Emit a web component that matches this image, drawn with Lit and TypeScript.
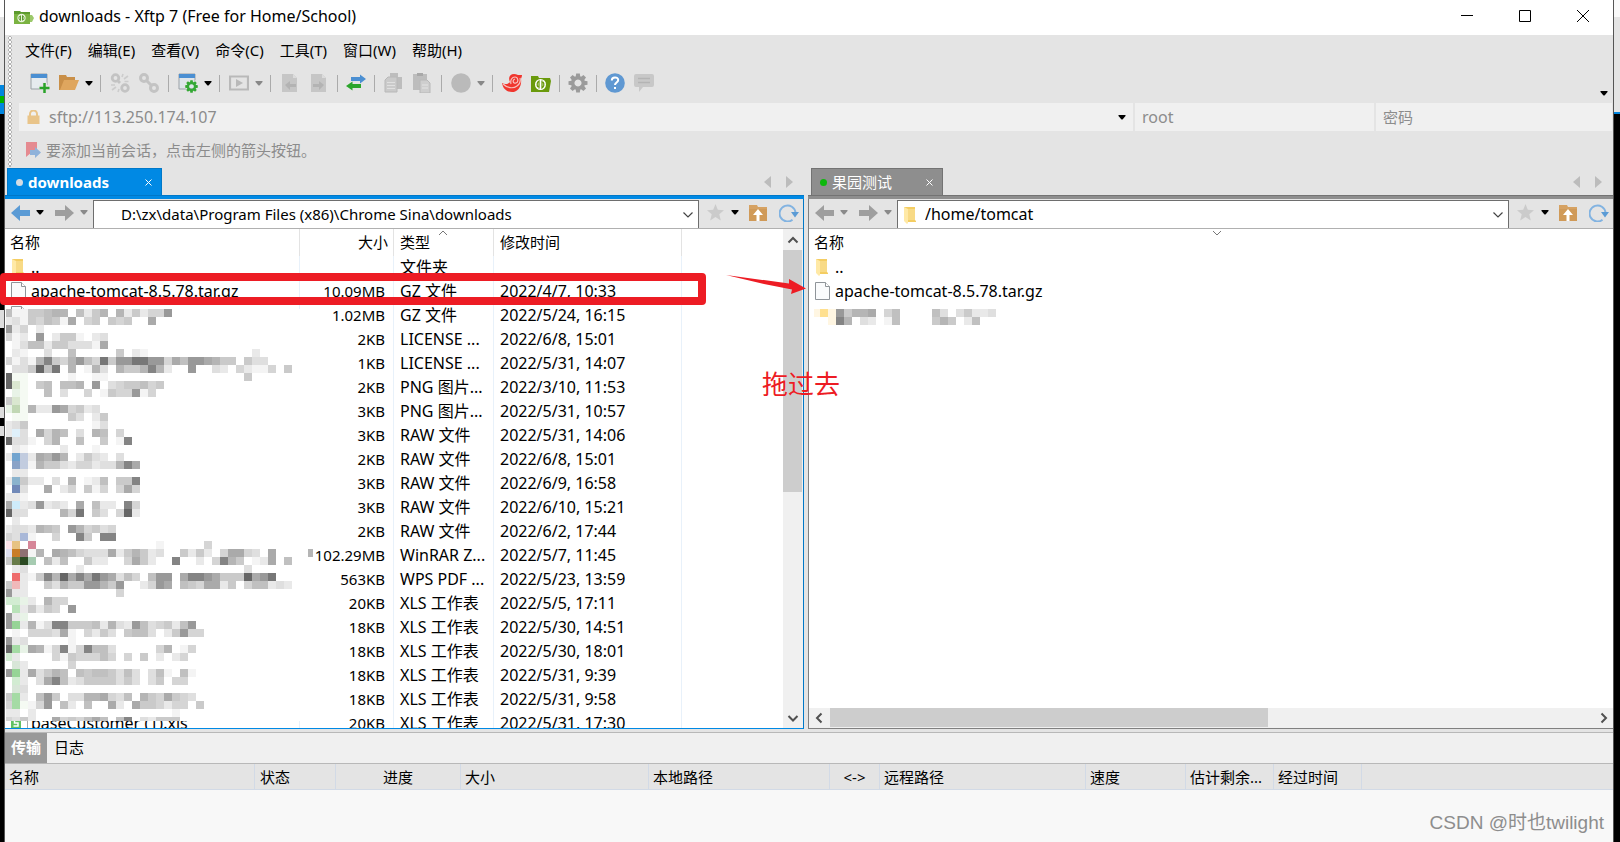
import { LitElement, html, svg, css, nothing, TemplateResult } from "lit";
import { customElement, property } from "lit/decorators.js";

const base = css`
  :host { box-sizing: border-box; font: 15px/20px "Noto Sans", "Noto Sans CJK SC", sans-serif; color: #000; }
  *, *::before, *::after { box-sizing: border-box; }
  button { display: inline-flex; align-items: center; justify-content: center; padding: 0; margin: 0; border: 0; background: none; font: inherit; color: inherit; flex: none; }
  input { font: inherit; border: 0; padding: 0; margin: 0; background: none; outline: none; min-width: 0; color: inherit; }
  svg { display: block; flex: none; }
`;

const caret = (color = "#000") => html`<svg width="8" height="5" viewBox="0 0 8 5"><path d="M.5 0h7v1L4.500 4.500h-1L.5 1z" fill=${color} /></svg>`;
const chevron = (d: string, color = "#444", w = 1.2) => html`<svg width="12" height="12" viewBox="0 0 12 12"><path d=${d} fill="none" stroke=${color} stroke-width=${w} /></svg>`;
const folder = html`<svg width="14" height="18" viewBox="0 0 14 18"><path d="M1 1h11v13l1 1v1H4L1 14z" fill="#f4cd62" /><path d="M4 3h8v11H4z" fill="#f8da86" /><path d="M1 1l4 2v14l-1 1-3-3z" fill="#ffe9a6" /></svg>`;
const page = html`<svg width="15" height="18" viewBox="0 0 15 18"><path d="M.5.5h10l4 4v13H.5z" fill="#fafbfc" stroke="#8f9499" /><path d="M10.500.5v4h4" fill="#fff" stroke="#8f9499" /></svg>`;
const sheet = html`<svg width="17" height="18" viewBox="0 0 17 18"><path d="M4 .5h12.500v17H4z" fill="#fff" stroke="#a9a9a9" /><path d="M0 3h10v12H0z" fill="#62c162" /><path d="M7.500 6H3.500v3h3.500v3H2.500" fill="none" stroke="#fff" stroke-width="1.500" /></svg>`;

const icon = (content: unknown) => html`<svg width="20" height="20" viewBox="0 0 20 20">${content}</svg>`;
const cog = (color: string, cx: number, cy: number, k: number) => svg`<g transform="translate(${cx} ${cy}) scale(${k})" fill=${color}>
  ${[0, 45, 90, 135, 180, 225, 270, 315].map((a) => svg`<path transform="rotate(${a})" d="M-1.800-9.500h3.600L2.500-5h-5z" />`)}
  <path fill-rule="evenodd" d="M0-7a7 7 0 1 0 .01 0zM0-3.500a3.500 3.500 0 1 1-.01 0z" /></g>`;

const icons: Record<string, TemplateResult> = {
  create: icon(svg`<path d="M1 1h16v15H1z" fill="#e6ebef" stroke="#9aa1a6" /><path d="M1 1h16v4H1z" fill="#4b8fd2" /><path d="M14.500 9.500v10M9.500 14.500h10" stroke="#e4e4e4" stroke-width="5" /><path d="M14.500 10v10M9.500 15h10" stroke="#29a329" stroke-width="2.500" />`),
  open: icon(svg`<path d="M0 2h7l1 2h8v4H6L2 17H0z" fill="#c98f48" /><path d="M5 7h15l-4 10H1z" fill="#dfa65e" />`),
  unlink: icon(svg`<g fill="none" stroke="#c3c3c3" stroke-width="2.800"><circle cx="5.500" cy="5" r="3.300" /><circle cx="15" cy="15" r="3.300" /><path d="M8 8l2 2" /></g><path d="M12 4l1-3M14 6l4-3M14.500 8.500h4M1 12h4M2 17l4-3M8 19l1-3" stroke="#cccccc" stroke-width="1.600" />`),
  link: icon(svg`<g fill="none" stroke="#c3c3c3" stroke-width="3"><circle cx="5" cy="5" r="3.500" /><circle cx="15" cy="15" r="3.500" /><path d="M7 7l6 6" /></g>`),
  props: icon(svg`<path d="M1 1h16v15H1z" fill="#dfe5ea" stroke="#9aa1a6" /><path d="M1 1h16v4H1z" fill="#4b8fd2" />${cog("#e4e4e4", 13.5, 13.5, 0.8)}${cog("#35a835", 13.5, 13.5, 0.66)}`),
  play: icon(svg`<path d="M1 3.500h18v13H1z" fill="none" stroke="#b9b9b9" stroke-width="2.200" /><path d="M7 6l7 4-7 4z" fill="#b9b9b9" />`),
  left: icon(svg`<path d="M2 1h11l4 4v14H2z" fill="#c6c6c6" /><path d="M13 1v4h4z" fill="#dcdcdc" /><path d="M5 12l5-4v3h6v3h-6v3z" fill="#b3b3b3" />`),
  right: icon(svg`<path d="M2 1h11l4 4v14H2z" fill="#c6c6c6" /><path d="M13 1v4h4z" fill="#dcdcdc" /><path d="M15 12l-5-4v3H4v3h6v3z" fill="#b3b3b3" />`),
  transfer: icon(svg`<path d="M5 4h9V1.500L20 6l-6 4.500V8H5z" fill="#4b8fd2" /><path d="M15 11H6.500V8.500L0 13l6.500 4.500V15H15z" fill="#2ba52b" />`),
  copy: icon(svg`<path d="M7 0h8v4h4v12H7z" fill="#bdbdbd" /><path d="M5 4L2 7v12h12V4z" fill="#cacaca" stroke="#b8b8b8" /><path d="M4 9.500h8M4 12.500h8M4 15.500h8" stroke="#e0e0e0" />`),
  paste: icon(svg`<path d="M1 1h14v16H1z" fill="#bdbdbd" /><path d="M5 0h6v3H5z" fill="#a8a8a8" /><path d="M8 7h7l3 3v10H8z" fill="#cecece" stroke="#b8b8b8" /><path d="M10 12h6M10 15h6" stroke="#e4e4e4" />`),
  disc: icon(svg`<circle cx="10" cy="10" r="9.800" fill="#bababa" />`),
  shell: icon(svg`<path d="M20 2c0 2-1 3-1 4 1 7-3 13-9 13-5 0-9-3-10-9 4 2 6 1 8-1C5 3 10-1 16 2z" fill="#f0362e" /><path d="M9 11c-1-4 1-7 4-7s4 5 1 6-4-3-1-4M1 11c4 4 10 5 14 2 3-2 4-4 3-8" fill="none" stroke="#f7c1bd" stroke-width="1.200" />`),
  ftp: icon(svg`<path d="M0 3h7l1 2h11l1 3-2 11H0z" fill="#6a9a0c" /><circle cx="9.500" cy="11.500" r="5.500" fill="#fff" /><path d="M8 15.500V8c-2 1-2.500 4-1 6M11 7.500V15c2-1 2.500-4 1-6" fill="none" stroke="#6a9a0c" stroke-width="1.300" />`),
  gear: icon(cog("#9b9b9b", 10, 10, 1)),
  help: icon(svg`<circle cx="10" cy="10" r="9.800" fill="#5f98d2" /><path d="M6.800 7.500c0-4 6.400-4 6.400-.5 0 2.500-3.200 2.500-3.200 5M10 14v2" fill="none" stroke="#fff" stroke-width="2" />`),
  chat: icon(svg`<path d="M2 1h16a2 2 0 0 1 2 2v9a2 2 0 0 1-2 2H9l-4 5v-5H2a2 2 0 0 1-2-2V3a2 2 0 0 1 2-2z" fill="#c8c8c8" /><path d="M4 5.500h12M4 9.500h12" stroke="#b4b4b4" stroke-width="1.500" />`),
};

/* Shades of the censored blocks: lower case for greys, the rest for tints. */
const tones: Record<string, string> = {
  a: "#f4f4f4", b: "#e9e9e9", c: "#dfdfdf", d: "#d5d5d5", e: "#cacaca", f: "#c0c0c0", g: "#b5b5b5", h: "#aaaaaa", i: "#999999", j: "#848484", k: "#777777", l: "#666666",
  P: "#f5faf3", G: "#dae7d0", H: "#e8f3e7", I: "#c1d7b4", S: "#dff0fa", T: "#72a4cf", U: "#c2ccdf", V: "#8aa3c7", W: "#8bb3cd", X: "#7189b8", Y: "#ceebfa", Z: "#a9b8d8",
  Q: "#fce4ea", O: "#e7c283", R: "#d68698", M: "#dfe0f0", N: "#c97d27", B: "#8f7073", C: "#677b48", D: "#2b4a22", E: "#a6cbb1", F: "#ee6c6c", J: "#f0b9ba", K: "#d2ecd2", L: "#b9e2b9",
  "8": "#96d496", "7": "#a5dba5", "3": "#d8e6d8", "1": "#fff6e2", "2": "#ffe08f",
};
const leftBlocks = [
  "faaeefgg.fbeg.gbebddi", "bcaedfeah.de.ede..h", "ibd.b", "dab.i.beea.bc", ".acffbeecccah", ".ba..c..f.....e.ba.............b",
  "dacagjedgifdkeiikkiidhfiihgee.ecc", ".ccelfk.g.agc.geegjgb..i..cb.dbaad.e", "lPP.....a..aa.................e", "lGP.ef.ffg.i.cdeefde",
  ".HP..f.c..d.aeddiad", "eGP", "HIPgbbihdebc", ".PP.....ec.be", "bce........ac", "bSc.hdgf.c.gf.d", "lcca.dg..f..e.aj", ".ba....b...a",
  "bTUbhgig.becb.c", ".VUageecbddbccgjh", ".bb", "bWebb.c.g.abf.eej", ".Xc..h.bd.ead.dhd", "bba", "hYbcibcb.h.fbb.jd", "lcc....gdk.ec.dlb", ".b",
  "bccbgfe.igdecd", "dcZa..d..je.jj", "QO.R...............a.....d", "MNBag.hgfdccchbegebc..ebeb.dhhdc.h", "eCDE.fbf..ebb..dheb..j..b.djge.abh.f",
  ".bc......b....................c", ".Fbaejglhjhkihcfd.fii.hjjiheeelhik", "eJb..ecgeeiigei..bdih.fedhhbe.dffbcb", "ibb...........d",
  "KKHb.gdd", ".Lbebed.i", "ibH", "i8bgacjjeeefbgcbifcdebfi", ".a.dddcha.dbec.effc.beidd", "ibc.....a", "l7Hhgadjadjffc.....dg.ad",
  "Kb....daedddfd.d.e.b.bd", ".3b.....d", "i8bhcegf.feffecfc.cfa.fa", ".Kb.chjfbceeeecec.ce.dd", ".3c", "e7b.fie.ccgghdcf.gedhedc",
  "d7Padi.fb.f..hb.heedbdd.e", "bb.b.................a", "dceb..hdedfhf.fj.cbeee",
];
const rightBlocks = ["121ieggh.df....fc.cebbc", "..1jg.cb.af....ege.bf"];

@customElement("pixel-mask")
class PixelMask extends LitElement {
  @property({ attribute: false }) rows: string[] = [];
  @property({ type: Number }) cut = 0;
  static styles = css`:host { display: block; } svg { display: block; }`;
  render() {
    const h = this.rows.length * 8 - this.cut;
    return html`<svg width="302" height=${h} viewBox="0 0 302 ${h}" shape-rendering="crispEdges">
      <rect width="302" height=${h} fill="#fff" />
      ${this.rows.map((row, y) => [...row].map((c, x) => c in tones
        ? svg`<rect x=${x ? x * 8 - 2 : 0} y=${y * 8} width=${x ? 8 : 6} height="8" fill=${tones[c]} />` : nothing))}
    </svg>`;
  }
}

interface FileRow { name: string; icon?: TemplateResult; size?: string; type?: string; date?: string }
const localFiles: FileRow[] = [
  { name: "..", icon: folder, type: "文件夹" },
  { name: "apache-tomcat-8.5.78.tar.gz", icon: page, size: "10.09MB", type: "GZ 文件", date: "2022/4/7, 10:33" },
  { name: "", icon: page, size: "1.02MB", type: "GZ 文件", date: "2022/5/24, 16:15" },
  ...([
    ["2KB", "LICENSE ...", "2022/6/8, 15:01"], ["1KB", "LICENSE ...", "2022/5/31, 14:07"], ["2KB", "PNG 图片...", "2022/3/10, 11:53"],
    ["3KB", "PNG 图片...", "2022/5/31, 10:57"], ["3KB", "RAW 文件", "2022/5/31, 14:06"], ["2KB", "RAW 文件", "2022/6/8, 15:01"],
    ["3KB", "RAW 文件", "2022/6/9, 16:58"], ["3KB", "RAW 文件", "2022/6/10, 15:21"], ["2KB", "RAW 文件", "2022/6/2, 17:44"],
    ["102.29MB", "WinRAR Z...", "2022/5/7, 11:45"], ["563KB", "WPS PDF ...", "2022/5/23, 13:59"], ["20KB", "XLS 工作表", "2022/5/5, 17:11"],
    ["18KB", "XLS 工作表", "2022/5/30, 14:51"], ["18KB", "XLS 工作表", "2022/5/30, 18:01"], ["18KB", "XLS 工作表", "2022/5/31, 9:39"],
    ["18KB", "XLS 工作表", "2022/5/31, 9:58"],
  ].map(([size, type, date]) => ({ name: "", size, type, date }))),
  { name: "baseCustomer (1).xls", icon: sheet, size: "20KB", type: "XLS 工作表", date: "2022/5/31, 17:30" },
];
const remoteFiles: FileRow[] = [
  { name: "..", icon: folder },
  { name: "apache-tomcat-8.5.78.tar.gz", icon: page },
];

@customElement("file-pane")
class FilePane extends LitElement {
  @property({ type: Boolean, reflect: true }) remote = false;
  @property() label = "";
  @property() path = "";
  @property({ attribute: false }) files: FileRow[] = [];

  static styles = [base, css`
    :host { --accent: #0089e4; --edge: #0078c8; display: flex; flex-direction: column; min-width: 0; min-height: 0; }
    :host([remote]) { --accent: #8e8e8e; --edge: #737373; }
    .tabs { display: flex; align-items: flex-end; justify-content: space-between; height: 27px; padding: 0 11px 0 2px; flex: none; }
    .tab { display: flex; align-items: center; width: 155px; height: 27px; padding: 0 7px 0 8px; gap: 5px; background: var(--accent); border: 1px solid var(--edge); border-bottom: 0; color: #fff; font-weight: 700; }
    :host([remote]) .tab { width: 132px; font-weight: 400; }
    :host([remote]) .tabs { padding-left: 3px; }
    .dot { width: 7px; height: 7px; border-radius: 50%; background: #d4dde4; }
    :host([remote]) .dot { background: #0cb80c; }
    .tab button { width: 12px; margin-left: auto; }
    .turn { display: flex; gap: 15px; align-self: center; }
    .bar { height: 4px; flex: none; background: var(--accent); border-top: 1px solid var(--edge); }
    .frame { display: flex; flex-direction: column; flex: 1; min-height: 0; border-right: 1px solid var(--edge); border-bottom: 1px solid var(--accent); }
    :host([remote]) .frame { border-right: 0; border-left: 1px solid #808080; border-bottom-color: #808080; }
    .nav { display: flex; height: 30px; flex: none; background: #e4e4e4; border-bottom: 1px solid #b0b0b0; padding-top: 1px; }
    .history, .actions { display: flex; align-items: center; flex: none; padding-bottom: 3px; }
    .history { width: 88px; padding-left: 6px; gap: 6px; }
    .history .fwd { margin-left: 5px; }
    .actions { width: 104px; padding-left: 8px; gap: 7px; }
    .actions .refresh { margin-left: 5px; }
    .actions .up { margin-left: 3px; }
    .path { display: flex; align-items: center; flex: 1; min-width: 0; background: #fff; border: 1px solid #6e6e6e; border-bottom: 0; padding: 0 4px 0 5px; gap: 8px; }
    .path input { flex: 1; height: 26px; padding-bottom: 2px; }
    :host([remote]) .path input { font-size: 16px; }
    .slot { width: 14px; flex: none; }
    .list { display: flex; flex: 1; min-height: 0; background: #fff; }
    :host([remote]) .list { flex-direction: column; }
    .view { flex: 1; min-width: 0; min-height: 0; overflow: hidden; }
    table { width: 100%; border-collapse: separate; border-spacing: 0; table-layout: fixed; }
    th, td { padding: 0 0 2px 6px; height: 24px; text-align: left; font-weight: 400; white-space: nowrap; overflow: hidden; border-right: 1px solid #e8f1fa; }
    td { font-size: 16px; }
    th { height: 27px; position: relative; border-right-color: #e3e3e3; }
    th:first-child { padding-left: 5px; }
    th:last-child, td:last-child { border-right: 0; }
    .num { text-align: right; padding-right: 8px; font-size: 15px; }
    th.num { padding-right: 5px; }
    .c-name { width: 295px; } .c-size { width: 94px; } .c-type { width: 100px; } .c-date { width: 188px; }
    .file { display: flex; align-items: center; gap: 5px; height: 22px; }
    .pic { width: 15px; flex: none; }
    .sort { position: absolute; top: 0; left: 43%; }
    :host([remote]) .sort { left: 50%; }
    .vbar { display: flex; flex-direction: column; width: 20px; background: #f0f0f0; flex: none; }
    .vbar button { width: 20px; height: 21px; }
    .vtrack { flex: 1; } .vthumb { width: 19px; height: 53%; background: #cdcdcd; }
    .hbar { display: flex; height: 20px; background: #f0f0f0; flex: none; }
    .hbar button { width: 21px; height: 19px; }
    .htrack { flex: 1; } .hthumb { width: 57.5%; height: 19px; background: #cdcdcd; }
  `];

  private cell(f: FileRow) {
    return html`<td><div class="file"><span class="pic">${f.icon ?? nothing}</span>${f.name}</div></td>`;
  }

  render() {
    const back = this.remote ? "#9e9e9e" : "#5b9bd5";
    return html`
      <div class="tabs">
        <div class="tab"><span class="dot"></span>${this.label}
          <button aria-label="关闭">${chevron("M3.500 3.500l6 6M9.500 3.500l-6 6", "#fff", 1)}</button></div>
        <div class="turn">
          <button aria-label="上一个"><svg width="7" height="12" viewBox="0 0 7 12"><path d="M7 0v12L0 6z" fill="#bcbcbc" /></svg></button>
          <button aria-label="下一个"><svg width="7" height="12" viewBox="0 0 7 12"><path d="M0 0v12l7-6z" fill="#bcbcbc" /></svg></button>
        </div>
      </div>
      <div class="bar"></div>
      <div class="frame">
        <div class="nav">
          <div class="history">
            <button aria-label="后退"><svg width="19" height="16" viewBox="0 0 19 16"><path d="M0 8l9-8v5h10v6H9v5z" fill=${back} /></svg></button>
            <button aria-label="后退记录">${caret(this.remote ? "#8a8a8a" : "#000")}</button>
            <button class="fwd" aria-label="前进"><svg width="19" height="16" viewBox="0 0 19 16"><path d="M19 8l-9-8v5H0v6h10v5z" fill="#9e9e9e" /></svg></button>
            <button aria-label="前进记录">${caret("#8a8a8a")}</button>
          </div>
          <div class="path"><span class="slot">${this.remote ? folder : nothing}</span>
            <input aria-label="路径" .value=${this.path} />
            <button aria-label="展开">${chevron("M1.500 3.500l4.500 4.500 4.500-4.500")}</button></div>
          <div class="actions">
            <button aria-label="收藏"><svg width="17" height="17" viewBox="0 0 17 17"><path d="M8.500 0l2.300 5.800 6.200.5-4.700 4 1.500 6.200-5.300-3.400-5.300 3.400 1.500-6.200-4.700-4 6.200-.5z" fill="#cbcbcb" /></svg></button>
            <button aria-label="收藏夹">${caret()}</button>
            <button class="up" aria-label="上级目录"><svg width="18" height="16" viewBox="0 0 18 16"><path d="M0 0h8l1 2h9v14H0z" fill="#d6a263" /><path d="M0 4h18v12H0z" fill="#d09a58" /><path d="M9 4l5 6h-3.500v6h-3v-6H4z" fill="#fff" /></svg></button>
            <button class="refresh" aria-label="刷新"><svg width="20" height="18" viewBox="0 0 20 18"><path d="M13.500 15.800A8 8 0 1 1 16.500 8.500" fill="none" stroke="#82b3e1" stroke-width="2" /><path d="M12 8h8l-4 5.500z" fill="#5b9bd5" /></svg></button>
          </div>
        </div>
        <div class="list">
          <div class="view">${this.remote ? this.remoteTable() : this.localTable()}</div>
          ${this.remote
            ? html`<div class="hbar"><button aria-label="向左">${chevron("M7.500 1.500L3 6l4.500 4.500", "#505050", 2)}</button><div class="htrack"><div class="hthumb"></div></div><button aria-label="向右">${chevron("M4.500 1.500L9 6l-4.500 4.500", "#505050", 2)}</button></div>`
            : html`<div class="vbar"><button aria-label="向上">${chevron("M1.500 8.500L6 4l4.500 4.500", "#505050", 2)}</button><div class="vtrack"><div class="vthumb"></div></div><button aria-label="向下">${chevron("M1.500 4L6 8.500 10.500 4", "#505050", 2)}</button></div>`}
        </div>
      </div>`;
  }

  private localTable() {
    return html`<table>
      <thead><tr><th class="c-name">名称</th><th class="c-size num">大小</th>
        <th class="c-type">类型<span class="sort">${chevron("M2 6l4-4 4 4", "#777", 1)}</span></th><th class="c-date">修改时间</th><th></th></tr></thead>
      <tbody>${this.files.map((f) => html`<tr>${this.cell(f)}<td class="num">${f.size ?? ""}</td><td>${f.type}</td><td>${f.date ?? ""}</td><td></td></tr>`)}</tbody>
    </table>`;
  }

  private remoteTable() {
    return html`<table>
      <thead><tr><th>名称<span class="sort">${chevron("M2 2l4 4 4-4", "#777", 1)}</span></th></tr></thead>
      <tbody>${this.files.map((f) => html`<tr>${this.cell(f)}</tr>`)}</tbody>
    </table>`;
  }
}

type Tool = [name: keyof typeof icons, label: string, arrow?: "on" | "off"] | "sep" | "tight";
const tools: Tool[] = [
  ["create", "新建"], ["open", "打开", "on"], "sep", ["unlink", "断开"], ["link", "重新连接"], "sep", ["props", "属性", "on"], "sep",
  ["play", "同步", "off"], "sep", ["left", "向左传输"], ["right", "向右传输"], "tight", ["transfer", "传输"], "tight", ["copy", "复制"], ["paste", "粘贴"], "sep",
  ["disc", "编码", "off"], "sep", ["shell", "Xshell"], ["ftp", "Xftp"], "tight", ["gear", "选项"], "tight", ["help", "帮助"], ["chat", "反馈"],
];
const menus = ["文件(F)", "编辑(E)", "查看(V)", "命令(C)", "工具(T)", "窗口(W)", "帮助(H)"];
const columns: [string, string][] = [
  ["名称", "c1"], ["状态", "c2"], ["进度", "c3"], ["大小", "c4"], ["本地路径", "c5"], ["<->", "c6"], ["远程路径", "c7"], ["速度", "c8"], ["估计剩余...", "c9"], ["经过时间", "c10"], ["", ""],
];

@customElement("app-root")
class AppRoot extends LitElement {
  static styles = [base, css`
    :host { display: flex; position: relative; height: 100vh; overflow: hidden; background: #000; }
    .behind-l { width: 5px; flex: none; border-right: 1px solid #555; background: linear-gradient(#fff 17px, #e4e4e4 17px 85px, #0086e0 85px 96px, #00b400 96px 103px, #0086e0 103px 114px, #000 114px 310px, #ddd 310px 328px, #000 328px 407px, #ddd 407px 418px, #000 418px 426px, #ddd 426px 436px, #000 436px); }
    .behind-r { width: 7px; flex: none; border-left: 1px solid #555; background: linear-gradient(#f9f9f9 17px, #e4e4e4 17px 112px, #0086e0 112px 114px, #000 114px); }
    .window { display: flex; flex-direction: column; flex: 1; min-width: 0; background: #e4e4e4; }
    .title { display: flex; align-items: center; height: 35px; padding: 0 1px 0 9px; background: #fff; flex: none; }
    .title h1 { margin: 0 0 0 5px; font-size: 16px; font-weight: 400; flex: 1; padding-bottom: 3px; }
    .title button { width: 58px; height: 32px; align-self: flex-start; }
    .head { display: flex; flex: none; height: 133px; }
    .grips { display: flex; flex-direction: column; gap: 4px; width: 14px; padding: 1px 0 1px 3px; }
    .grip { width: 4px; background: radial-gradient(circle at 2px 2px, #fff 1px, #a9a9a9 1px 1.5px, transparent 2px) 0 0 / 4px 4px; }
    .grip:first-child { height: 62px; } .grip:last-child { flex: 1; }
    .rows { flex: 1; min-width: 0; }
    .menu { display: flex; gap: 16px; height: 32px; padding: 0 0 2px 6px; align-items: center; }
    .tools { display: flex; align-items: center; height: 36px; padding: 0 5px 4px 6px; }
    .tools button { width: 29px; height: 28px; }
    .tools .drop { width: 12px; }
    .tools .more { width: 8px; margin-left: auto; align-self: flex-end; height: 12px; }
    .sep { width: 10px; height: 17px; background: linear-gradient(#aaa, #aaa) center / 1px 100% no-repeat; flex: none; }
    .tight { width: 8px; }
    .login { display: grid; grid-template-columns: 1114fr 239fr 236fr; gap: 2px; height: 28px; padding-right: 1px; color: #8c8c8c; }
    .field { display: flex; align-items: center; background: #f0f0f0; padding: 0 7px; min-width: 0; }
    .field input { flex: 1; width: 100%; height: 28px; }
    .field input::placeholder { color: #8c8c8c; opacity: 1; }
    .host { gap: 9px; padding-left: 8px; }
    .host input, .user input { font-size: 16px; }
    .tip { display: flex; align-items: center; gap: 5px; height: 37px; padding: 0 0 0 6px; color: #8c8c8c; }
    .panes { display: grid; grid-template-columns: 799fr 805fr; gap: 4px; flex: 1; min-height: 0; }
    .panes file-pane { grid-row: 1; }
    .bottom { flex: none; margin-top: 3px; height: 110px; border-top: 1px solid #b8b8b8; background: #f8f8f8; overflow: hidden; }
    .switch { display: flex; height: 31px; background: #f0f0f0; border-bottom: 1px solid #b8b8b8; }
    .switch button { padding: 0 7px 2px; }
    .switch .on { width: 42px; padding: 0 0 2px; background: #999; color: #fff; font-weight: 700; }
    table { width: 100%; border-spacing: 0; table-layout: fixed; background: #e4e4e4; }
    th { height: 26px; padding: 0 0 0 4px; text-align: left; font-weight: 400; white-space: nowrap; border-right: 1px solid #d2dae6; border-bottom: 1px solid #d2dae6; }
    th:last-child { border-right: 0; }
    .c1 { width: 250px; } .c2 { width: 81px; padding-left: 5px; } .c3 { width: 125px; text-align: center; padding: 0; } .c4 { width: 188px; } .c5 { width: 181px; }
    .c6 { width: 50px; text-align: center; padding-left: 0; } .c7 { width: 206px; } .c8 { width: 100px; } .c9 { width: 88px; } .c10 { width: 88px; }
    .over { position: absolute; }
    .mask-l { left: 6px; top: 309px; } .mask-r { left: 814px; top: 309px; }
    .stain { left: 308px; top: 549px; width: 5px; height: 8px; background: #b5b5b5; }
    .box { left: 0; top: 273px; width: 706px; height: 32px; border: 8px solid #ed1c24; border-left-width: 6px; border-radius: 4px; }
    .pointer { left: 724px; top: 272px; }
    .note { left: 762px; top: 366px; font-size: 26px; line-height: 36px; color: #ed1c24; }
    .mark { right: 16px; bottom: 6px; font: 19px/26px "Liberation Sans", "Noto Sans CJK SC", sans-serif; color: #8d8d8d; }
  `];

  render() {
    return html`
      <div class="behind-l"></div>
      <main class="window">
        <header class="title">
          <svg width="20" height="15" viewBox="0 0 20 15"><path d="M0 1h6l1 1h9v12H0z" fill="#5c9a2e" /><path d="M0 4h16v10H0z" fill="#7bb342" /><path d="M16 5h2l2 3-2 4h-2z" fill="#9cc96b" /><circle cx="7.500" cy="8" r="4.200" fill="#e9f4dc" /><path d="M6.500 5.500v5c-1.500-.5-2-3-1-4.500M8.500 10.500v-5c1.500.5 2 3 1 4.500" fill="none" stroke="#5c9a2e" /></svg>
          <h1>downloads - Xftp 7 (Free for Home/School)</h1>
          <button aria-label="最小化"><svg width="12" height="12" viewBox="0 0 12 12"><path d="M0 5.500h12" stroke="#000" /></svg></button>
          <button aria-label="最大化"><svg width="12" height="12" viewBox="0 0 12 12"><path d="M.5.5h11v11H.5z" fill="none" stroke="#000" /></svg></button>
          <button aria-label="关闭"><svg width="12" height="12" viewBox="0 0 12 12"><path d="M0 0l12 12M12 0L0 12" stroke="#000" /></svg></button>
        </header>
        <div class="head">
          <div class="grips"><span class="grip"></span><span class="grip"></span></div>
          <div class="rows">
            <nav class="menu">${menus.map((m) => html`<button>${m}</button>`)}</nav>
            <div class="tools">
              ${tools.map((t) => typeof t === "string"
                ? html`<span class="sep ${t}"></span>`
                : html`<button aria-label=${t[1]}>${icons[t[0]]}</button>${t[2] ? html`<button class="drop" aria-label="${t[1]}选项">${caret(t[2] === "on" ? "#000" : "#888")}</button>` : nothing}`)}
              <button class="more" aria-label="更多">${caret()}</button>
            </div>
            <div class="login">
              <label class="field host"><svg width="13" height="14" viewBox="0 0 13 14"><path d="M3 7V4a3.500 3.500 0 0 1 7 0v3" fill="none" stroke="#e9c489" stroke-width="2" /><path d="M.5 5.500h12V14H.5z" fill="#e9c489" /></svg>
                <input aria-label="主机" value="sftp://113.250.174.107" />${caret()}</label>
              <label class="field user"><input aria-label="用户名" placeholder="root" /></label>
              <label class="field pass"><input type="password" aria-label="密码" placeholder="密码" /></label>
            </div>
            <div class="tip"><svg width="16" height="16" viewBox="0 0 16 16"><path d="M1 0h11v14l-5-4-6 5z" fill="#e58a90" /><path d="M5 8h5V5l6 5.500L10 16v-3H5z" fill="#8fb2da" /></svg>要添加当前会话，点击左侧的箭头按钮。</div>
          </div>
        </div>
        <div class="panes">
          <file-pane label="downloads" path="D:\\zx\\data\\Program Files (x86)\\Chrome Sina\\downloads" .files=${localFiles}></file-pane>
          <file-pane remote label="果园测试" path="/home/tomcat" .files=${remoteFiles}></file-pane>
        </div>
        <section class="bottom">
          <div class="switch"><button class="on">传输</button><button>日志</button></div>
          <table><thead><tr>${columns.map(([t, c]) => html`<th class=${c}>${t}</th>`)}</tr></thead></table>
        </section>
      </main>
      <div class="behind-r"></div>
      <pixel-mask class="over mask-l" .rows=${leftBlocks} .cut=${4}></pixel-mask>
      <pixel-mask class="over mask-r" .rows=${rightBlocks}></pixel-mask>
      <div class="over stain"></div>
      <div class="over box"></div>
      <svg class="over pointer" width="84" height="26" viewBox="0 0 84 26"><path d="M2 3l63 8.500V7l17 9.500L67 22l1-4.500L40 12z" fill="#ed1c24" /></svg>
      <div class="over note">拖过去</div>
      <div class="over mark">CSDN @时也twilight</div>`;
  }
}
